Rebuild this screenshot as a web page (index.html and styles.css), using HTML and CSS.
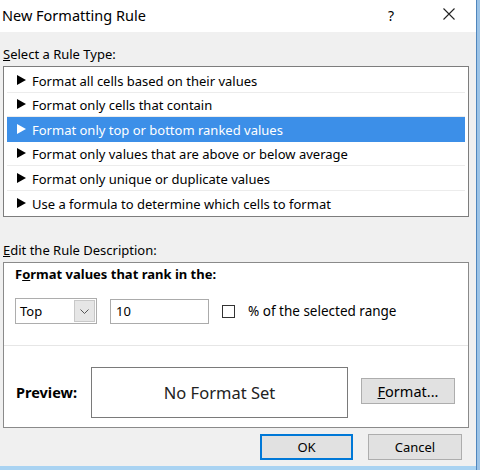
FILE: index.html
```html
<!DOCTYPE html>
<html>
<head>
<meta charset="utf-8">
<link rel="stylesheet" href="styles.css">
</head>
<body>
<div class="window">
  <div class="dialog">
    <div class="titlebar">
      <span class="title">New Formatting Rule</span>
      <span class="help">?</span>
      <span class="close"><svg width="12" height="12" viewBox="0 0 12 12"><path d="M0.5 0.5 L11.5 11.5 M11.5 0.5 L0.5 11.5" stroke="#222" stroke-width="1.1" fill="none"/></svg></span>
    </div>
    <div class="body">
      <div class="label lbl-type"><u>S</u>elect a Rule Type:</div>
      <div class="listbox">
        <div class="row"><span class="arrow"></span>Format all cells based on their values</div>
        <div class="row"><span class="arrow"></span>Format only cells that contain</div>
        <div class="row selected"><span class="arrow"></span>Format only top or bottom ranked values</div>
        <div class="row"><span class="arrow"></span>Format only values that are above or below average</div>
        <div class="row"><span class="arrow"></span>Format only unique or duplicate values</div>
        <div class="row last"><span class="arrow"></span>Use a formula to determine which cells to format</div>
      </div>
      <div class="label lbl-desc"><u>E</u>dit the Rule Description:</div>
      <div class="desc">
        <div class="desc-top">
          <div class="heading">F<u>o</u>rmat values that rank in the:</div>
          <div class="controls">
            <div class="select"><span class="sel-text">Top</span><span class="sel-btn"><svg width="9" height="5" viewBox="0 0 9 5"><path d="M0.5 0.5 L4.5 4.5 L8.5 0.5" stroke="#555" stroke-width="1" fill="none"/></svg></span></div>
            <div class="input">10</div>
            <div class="checkbox"></div>
            <span class="cb-label">% of the selected range</span>
          </div>
        </div>
        <div class="desc-bottom">
          <span class="preview-label">Preview:</span>
          <div class="preview-box">No Format Set</div>
          <div class="btn fmt-btn"><u>F</u>ormat...</div>
        </div>
      </div>
      <div class="buttons">
        <div class="btn ok">OK</div>
        <div class="btn cancel">Cancel</div>
      </div>
    </div>
    <div class="edge-bottom"></div>
  </div>
  <div class="edge-right"></div>
</div>
</body>
</html>
```

FILE: styles.css
```css
html, body {
  margin: 0;
  padding: 0;
  background: #f0f0f0;
}
body {
  font-family: "Noto Sans", "Open Sans", sans-serif;
  font-size: 13px;
  color: #000;
}
.window {
  display: flex;
  width: 480px;
  height: 470px;
  overflow: hidden;
}
.dialog {
  width: 476px;
  display: flex;
  flex-direction: column;
  background: #f0f0f0;
}
.edge-right {
  width: 4px;
  background: linear-gradient(to right, #4f86bd 0, #4f86bd 1px, #9cc3e6 1px);
}
.edge-bottom {
  height: 4px;
  margin-top: auto;
  background: #a9d3f2;
}
.titlebar {
  height: 32px;
  background: #fff;
  display: flex;
  align-items: center;
}
.title {
  font-size: 14.5px;
  padding-left: 2px;
  flex: 1;
  margin-top: -2px;
}
.help {
  font-size: 14px;
  width: 20px;
  text-align: center;
  margin-right: 42px;
  margin-top: -2px;
}
.close {
  width: 12px;
  height: 12px;
  margin-right: 21px;
  display: flex;
  margin-top: -4px;
}
.body {
  padding: 0 7px 0 3px;
  display: flex;
  flex-direction: column;
}
.label {
  line-height: 16px;
  height: 16px;
}
.lbl-type {
  margin-top: 14px;
}
.listbox {
  margin-top: 4px;
  background: #fff;
  border: 1px solid #7d7d7d;
  padding: 1px 3px;
  height: 151px;
  box-sizing: border-box;
}
.row {
  height: 24.5px;
  box-sizing: border-box;
  border-bottom: 1px solid #ececec;
  display: flex;
  align-items: center;
  padding-left: 10px;
  padding-top: 2px;
  white-space: nowrap;
}
.row.last {
  border-bottom: none;
}
.row.selected {
  background: #3c8fe8;
  color: #fff;
  border-bottom-color: #3c8fe8;
}
.arrow {
  width: 0;
  height: 0;
  border-top: 5px solid transparent;
  border-bottom: 5px solid transparent;
  border-left: 9px solid #000;
  margin-right: 6px;
  margin-top: -2px;
}
.row.selected .arrow {
  border-left-color: #fff;
}
.lbl-desc {
  margin-top: 25px;
}
.desc {
  margin-top: 4px;
  background: #fff;
  border: 1px solid #8a8a8a;
  height: 166px;
  box-sizing: border-box;
  display: flex;
  flex-direction: column;
}
.desc-top {
  height: 83px;
  border-bottom: 1px solid #e6e6e6;
  padding-left: 11px;
  box-sizing: border-box;
}
.heading {
  font-weight: bold;
  font-size: 13px;
  line-height: 16px;
  margin-top: 3px;
}
.controls {
  margin-top: 16px;
  display: flex;
  align-items: center;
}
.select {
  width: 82px;
  height: 26px;
  box-sizing: border-box;
  border: 1px solid #adadad;
  background: #fff;
  display: flex;
  align-items: center;
  padding: 0 1px 0 4px;
}
.sel-text {
  flex: 1;
}
.sel-btn {
  width: 21px;
  height: 22px;
  box-sizing: border-box;
  border: 1px solid #c8c8c8;
  background: #e6e6e6;
  display: flex;
  align-items: center;
  justify-content: center;
}
.input {
  margin-left: 13px;
  width: 99px;
  height: 25px;
  box-sizing: border-box;
  border: 1px solid #ababab;
  padding-left: 5px;
  display: flex;
  align-items: center;
}
.checkbox {
  margin-left: 13px;
  width: 13px;
  height: 13px;
  box-sizing: border-box;
  border: 1px solid #333;
  background: #fff;
}
.cb-label {
  margin-left: 13px;
  font-size: 13.5px;
}
.desc-bottom {
  flex: 1;
  display: flex;
  align-items: center;
  padding-left: 12px;
  padding-top: 11px;
}
.preview-label {
  font-weight: bold;
  font-size: 14.5px;
  width: 75px;
}
.preview-box {
  width: 257px;
  height: 51px;
  box-sizing: border-box;
  border: 1px solid #7a7a7a;
  display: flex;
  align-items: center;
  justify-content: center;
  font-size: 16.5px;
  color: #222;
}
.btn {
  height: 26px;
  box-sizing: border-box;
  border: 1px solid #adadad;
  background: #e1e1e1;
  display: flex;
  align-items: center;
  justify-content: center;
}
.fmt-btn {
  margin-left: 13px;
  width: 94px;
  margin-top: -3px;
  font-size: 14.5px;
}
.buttons {
  margin-top: 6px;
  display: flex;
  justify-content: flex-end;
  gap: 15px;
  padding-right: 7px;
}
.ok {
  width: 93px;
  height: 26px;
  border: 2px solid #0078d7;
}
.cancel {
  width: 94px;
  height: 26px;
}
```
